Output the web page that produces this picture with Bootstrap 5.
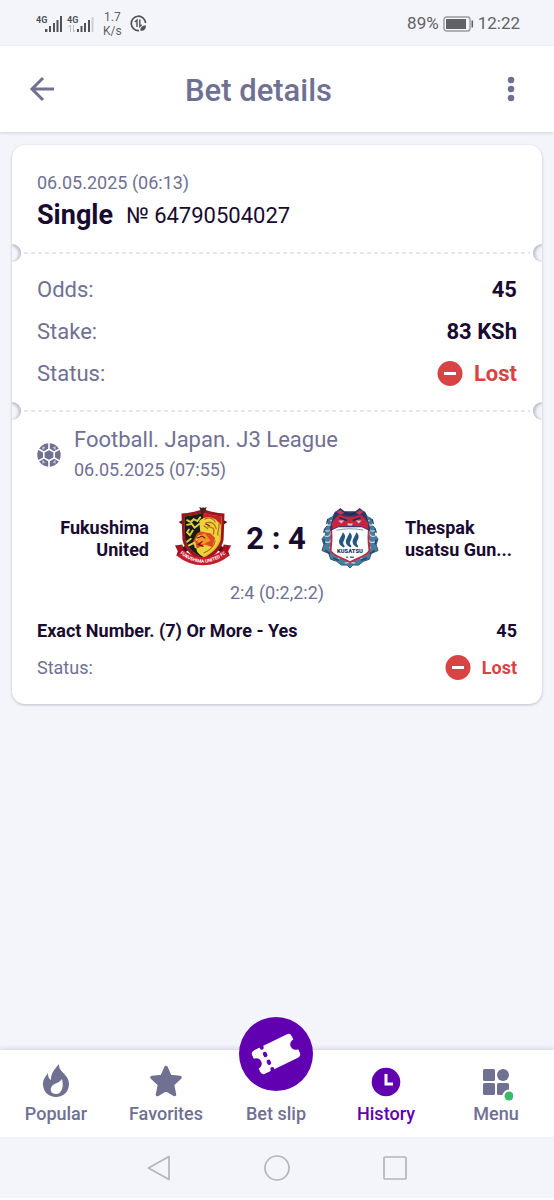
<!DOCTYPE html>
<html lang="en">
<head>
<meta charset="utf-8">
<meta name="viewport" content="width=device-width, initial-scale=1">
<title>Bet details</title>
<link href="https://cdn.jsdelivr.net/npm/bootstrap@5.3.0/dist/css/bootstrap.min.css" rel="stylesheet">
<style>
:root{--page:#f4f5fa;--muted-ink:#707093;--ink:#190a30;--brand:#6100b0;--lost:#d84444}
body{font-family:Roboto,"Liberation Sans",sans-serif;background:var(--page);color:var(--ink)}
svg{display:block;flex-shrink:0}
a{text-decoration:none;color:inherit}
.ink-muted{color:var(--muted-ink)}
.ink-lost{color:var(--lost)}
.status-bar{height:46px;padding:1px 34px 0 36px;color:#606266;font-size:17px}
.net-speed{font-size:12px;line-height:14px;margin-left:9px;margin-right:8px}
.app-bar{height:86px;padding:0 25px 0 24px;background:#fff;box-shadow:0 1px 3px rgba(60,60,110,.2)}
.app-bar h1{font-size:31px;line-height:40px;font-weight:500;padding:4px 36px 0 0}
.icon-btn{width:36px;height:36px;padding:0;border:0;background:none;display:flex;align-items:center;justify-content:center}
.ticket{margin:13px 12px;background:#fff;border-radius:13px;box-shadow:0 1px 3px rgba(50,50,80,.28)}
.part{position:relative;padding:0 25px}
.part-head{padding-top:24px;padding-bottom:19px}
.part-sums{padding-top:16px;padding-bottom:16px}
.part-event{padding-top:14px;padding-bottom:15px}
.tear{position:absolute;left:0;right:0;bottom:-9px;height:18px;overflow:hidden;z-index:1}
.tear::before,.tear::after{content:"";position:absolute;top:0;width:18px;height:18px;border-radius:50%;background:var(--page)}
.tear::before{left:-9px;box-shadow:inset -2px 1px 3px rgba(50,50,80,.3)}
.tear::after{right:-9px;box-shadow:inset 2px 1px 3px rgba(50,50,80,.3)}
.tear i{position:absolute;left:12px;right:12px;top:8px;height:2px;background:repeating-linear-gradient(90deg,#e6e6ec 0 4px,transparent 4px 7px)}
.fs-date{font-size:18px;line-height:28px}
.kind{font-size:27px;line-height:36px;font-weight:700;margin-right:13px}
.number{font-size:22px;line-height:36px;padding-top:1px}
.sum-row{font-size:22px;line-height:42px}
.sum-row dt{font-weight:400}
.league{font-size:22px;line-height:30px}
.kickoff{font-size:18px;line-height:30px}
.match{height:68px;margin-top:18px;gap:25px}
.team{font-size:18px;line-height:22px;font-weight:700;flex:1 1 0;min-width:0;padding-top:3px}
.versus{width:206px}
.score{font-size:31px;line-height:40px;font-weight:700;padding-top:3px}
.halves{font-size:18px;line-height:44px}
.pick{font-size:18px;line-height:32px;font-weight:700}
.result{font-size:18px;line-height:42px}
.tabs{height:87px;padding:0 3px 0 1px;background:#fff;box-shadow:0 -2px 4px rgba(60,60,110,.15)}
.tab-link{height:87px;font-size:18px;line-height:24px;font-weight:500;color:var(--muted-ink);position:relative;padding-bottom:11px}
.tab-link.active{color:var(--brand)}
.tab-icon{height:38px}
.slip-btn{position:absolute;left:50%;top:-33px;width:74px;height:74px;margin-left:-37px;border-radius:50%;background:var(--brand)}
.sys-bar{height:61px;gap:92px}
.page-end{height:2px;background:#fff}
</style>
</head>
<body>
<div class="d-flex flex-column min-vh-100">
<div class="status-bar d-flex align-items-center justify-content-between">
  <div class="d-flex align-items-center">
    <svg width="58" height="22" viewBox="0 0 58 22" fill="#505258">
      <g font-family="Roboto" font-size="9" font-weight="700"><text x="0" y="10">4G</text><text x="31" y="10">4G</text></g>
      <path d="M9 16h2.400v3H9zM13 13h2v6h-2zM17 10h2v9h-2zM20.500 7h2v12h-2zM24 3h2v16h-2zM41 16h2v3h-2zM44.500 13h2v6h-2zM48 10h2v9h-2zM52 7h2v12h-2z"/>
      <path d="M55.500 4h2v15h-2z" fill="#cfd1d6"/><path d="M34.500 19v-7l-2 2m5-2v7l2-2" fill="none" stroke="#bcbec4"/>
    </svg>
    <div class="net-speed text-center">1.7<br>K/s</div>
    <svg width="17" height="17" viewBox="0 0 17 17" fill="none" stroke="#505258" stroke-width="1.700"><path d="M15.600 8A7.200 7.200 0 1 0 9 15.600"/><path d="M7 12v-7L4.800 7M9.800 4.500v7l2-1.800" stroke-width="1.400"/><path d="M10.500 15.800c-.6-4 2-5.300 5.500-5.400 0 3-1.500 5.700-5.500 5.400z" fill="#505258" stroke="none"/></svg>
  </div>
  <div class="d-flex align-items-center gap-1">
    <span>89%</span>
    <svg width="31" height="16" viewBox="0 0 31 16"><rect x="1" y="1" width="26" height="14" rx="2.500" fill="none" stroke="#9a9ca0" stroke-width="1.400"/><path d="M3 3h20v10H3z" fill="#606266"/><path d="M28.500 4.500h1.600v7h-1.600z" fill="#606266"/></svg>
    <span>12:22</span>
  </div>
</div>
<header class="app-bar d-flex align-items-center ink-muted">
  <button class="icon-btn ink-muted" type="button" aria-label="Back"><svg width="26" height="26" viewBox="0 0 26 26" fill="none" stroke="currentColor" stroke-width="3"><path d="M14 2 3 13l11 11M3 13h22"/></svg></button>
  <h1 class="m-0 flex-grow-1 text-center">Bet details</h1>
  <button class="icon-btn ink-muted" type="button" aria-label="More"><svg width="8" height="26" viewBox="0 0 8 26" fill="currentColor"><circle cx="4" cy="4" r="3.300"/><circle cx="4" cy="13" r="3.300"/><circle cx="4" cy="22" r="3.300"/></svg></button>
</header>
<main class="flex-grow-1">
<article class="ticket">
  <section class="part part-head">
    <div class="fs-date ink-muted">06.05.2025 (06:13)</div>
    <div class="d-flex"><span class="kind">Single</span><span class="number">№ 64790504027</span></div>
    <div class="tear"><i></i></div>
  </section>
  <section class="part part-sums">
    <dl class="m-0">
      <div class="sum-row d-flex justify-content-between"><dt class="ink-muted">Odds:</dt><dd class="m-0 fw-bold">45</dd></div>
      <div class="sum-row d-flex justify-content-between"><dt class="ink-muted">Stake:</dt><dd class="m-0 fw-bold">83 KSh</dd></div>
      <div class="sum-row d-flex justify-content-between"><dt class="ink-muted">Status:</dt><dd class="m-0 fw-bold ink-lost d-flex align-items-center"><svg class="me-2" width="29" height="26" viewBox="0 0 29 26"><circle cx="13" cy="12.500" r="12.500" fill="currentColor"/><path d="M7 11h12v3H7z" fill="#fff"/></svg>Lost</dd></div>
    </dl>
    <div class="tear"><i></i></div>
  </section>
  <section class="part part-event">
    <div class="d-flex align-items-center ink-muted">
      <svg class="me-2" width="29" height="24" viewBox="0 0 29 24"><circle cx="12" cy="12" r="11.700" fill="currentColor"/><g fill="none" stroke="#fff" stroke-width="1.600"><path d="M12 6.200l5.200 2.900v5.800L12 17.800l-5.200-2.900V9.100z"/><path d="M12 0v6.200M12 17.800V24M6.800 9.100L1 5.800M17.200 9.100L23 5.800M6.800 14.900L1 18.200M17.200 14.900l5.800 3.300"/></g><path d="M5.200 3.500l3.300.7-3 3.300zM18.800 3.500l-3.300.7 3 3.300zM5.200 20.500l3.300-.7-3-3.300zM18.800 20.500l-3.300-.7 3-3.300z" fill="#fff" opacity=".55"/></svg>
      <div><div class="league">Football. Japan. J3 League</div><div class="kickoff">06.05.2025 (07:55)</div></div>
    </div>
    <div class="match d-flex align-items-center">
      <div class="team text-end">Fukushima<br>United</div>
      <div class="versus d-flex align-items-center justify-content-between">
      <svg width="58" height="64" viewBox="0 0 62 64">
        <path d="M5 16l4-2 5 8 41 22-3 6zM57 16l-4-2-5 8L7 44l3 6z" fill="#4a1418"/>
        <path d="M8 7c9-1 15-2 23-5 8 3 14 4 23 5l-1 28c-2 11-12 19-22 25-10-6-20-14-22-25z" fill="#9e1520"/>
        <path d="M11 10c8-1 13-2 20-4 7 2 12 3 20 4l-1 25c-2 8-10 15-19 20-9-5-17-12-19-20z" fill="#e3b92d"/>
        <path d="M11 10c8-1 13-2 20-4v49c-9-5-17-12-19-20z" fill="#1a1c14"/>
        <path d="M31 6c7 2 12 3 20 4l-1 9-6-6-7-2-6 4z" fill="#c3202a"/>
        <path d="M27 15c5-6 15-5 19 0 5 4 3 8 4 12-3 3 0 8-3 11-3 7-9 12-16 15-6-3-8-7-7-13l5-4z" fill="#ecd23b"/>
        <path d="M24 29c5-5 9-1 15-1l5 5-3 10-8-3-8 4-5-6z" fill="#df4a21"/>
        <path d="M25 31l8-3 6 8-8 4-6-3z" fill="#f2982b"/>
        <g fill="none" stroke-linecap="round"><path d="M14 14l4 2 3-3 4 2 3-4m-14 8 5-1 3 4 5-4m-11 6-2 3 3 3 3-5m-6 12 4-3m-2 7 6-3 1 5m1-8 3-4" stroke="#ddcf48" stroke-width="2"/><path d="M33 13c5-3 9-1 11 3m-10 1c6-2 10 1 11 6m-9-2c6 0 8 3 6 8m6-11c1 6-2 7-1 12M32 20l4 3m-4 26c7-3 11-7 12-13" stroke="#b8651c" stroke-width="1.200"/><path d="M25 33l5-2 3 2m-3 4-4 3 5 2M34 18l4 2" stroke="#65150f" stroke-width="1.200"/></g>
        <path d="M28 3l-1-3 3 1 1-1 1 1 3-1-1 3-2 4h-2z" fill="#47211a"/>
        <path d="M5 48c16 13 36 13 52 0" fill="none" stroke="#c51c2c" stroke-width="9"/>
        <path d="M1 41l8-1 2 10-8 1 1-4zM61 41l-8-1-2 10 8 1-1-4z" fill="#a90f20"/>
        <path id="ribbonLine" d="M2 46Q31 73 60 46" fill="none"/>
        <text font-family="Roboto" font-size="5" font-weight="700" fill="#fff" text-anchor="middle"><textPath href="#ribbonLine" startOffset="50%">FUKUSHIMA UNITED FC</textPath></text>
      </svg>
      <div class="score">2 : 4</div>
      <svg width="60" height="64" viewBox="0 0 62 64">
        <path d="M16 6l-3 5-4 2 0 6-4 4 1 6-4 5 2 6-2 6 7 3 2 6 6 2 5 4 6 0 3 3 3-3 6 0 5-4 6-2 2-6 7-3-2-6 2-6-4-5 1-6-4-4 0-6-4-2-3-5z" fill="#4a7d99" stroke="#2d5578" stroke-width="1"/>
        <g fill="none" stroke-linecap="round"><path d="M11 15c4 1 1 5-3 5m3 1c2 4-3 6-6 4m6 1c1 5-4 7-7 4m8 3c0 5-4 5-7 4m9 1c1 5-2 6-4 5m8 1c2 4-2 6-5 5m9-1c2 3 0 5-3 6M51 15c-4 1-1 5 3 5m-3 1c-2 4 3 6 6 4m-6 1c-1 5 4 7 7 4m-8 3c0 5 4 5 7 4m-9 1c-1 5 2 6 4 5m-8 1c-2 4 2 6 5 5m-9-1c-2 3 0 5 3 6M26 59l5-1 5 1" stroke="#b9d8e4" stroke-width="1.200"/><path d="M8 14l-1 4m-2 6-1 3m0 8 1 4m1 7 4 3m4 5 5 2M54 14l1 4m2 6 1 3m0 8-1 4m-1 7-4 3m-4 5-5 2" stroke="#25486f" stroke-width="1.500"/></g>
        <path d="M11 22c10-4 30-4 40 0-2 8-1 16 0 24-3 6-12 7-20 12-8-5-17-6-20-12 1-8 2-16 0-24z" fill="#fff" stroke="#c62645" stroke-width="1.800"/>
        <path d="M11 19l4-12 6-5 5 4h10l5-4 6 5 4 12 1 7-9-4H19l-9 4z" fill="#2a3a64"/>
        <path d="M12 18l4-6 4-3 7 2h8l7-2 4 3 4 6-1 6-7-3H20l-7 3z" fill="#c72444"/>
        <path d="M17 6l4-2 4 3-4 2zM45 6l-4-2-4 3 4 2z" fill="#c93752"/>
        <path d="M19 15h6l-3 3zM43 15h-6l3 3zM28 18h6l-1 2h-4z" fill="#e4c4ce"/>
        <path d="M20 12l8 3m14-3-8 3M25 7l6 2 6-2" fill="none" stroke="#1b2c55" stroke-width="1.500"/>
        <path d="M17 25c8-2 20-2 28 0" fill="none" stroke="#8193aa"/>
        <path d="M24 29c4 4-5 8 1 13-8-4-3-8-1-13zm7 0c4 4-5 8 1 13-8-4-3-8-1-13zm7 0c4 4-5 8 1 13-8-4-3-8-1-13z" fill="#24577f" stroke="#24577f" stroke-width="2"/>
        <text x="31" y="49" font-family="Roboto" font-size="6" font-weight="900" fill="#1d315c" text-anchor="middle">KUSATSU</text><path d="M27 53h2m2 0h4" fill="none" stroke="#53698c" stroke-width="1.500"/>
      </svg>
      </div>
      <div class="team text-nowrap">Thespak<br>usatsu Gun...</div>
    </div>
    <div class="halves text-center ink-muted">2:4 (0:2,2:2)</div>
    <div class="pick d-flex justify-content-between"><span>Exact Number. (7) Or More - Yes</span><span>45</span></div>
    <div class="result d-flex justify-content-between"><span class="ink-muted">Status:</span><span class="fw-bold ink-lost d-flex align-items-center"><svg class="me-2" width="29" height="26" viewBox="0 0 29 26"><circle cx="13" cy="12.500" r="12.500" fill="currentColor"/><path d="M7 11h12v3H7z" fill="#fff"/></svg>Lost</span></div>
  </section>
</article>
</main>
<nav class="tabs row row-cols-5 g-0">
  <a href="#" class="tab-link col d-flex flex-column align-items-center justify-content-end"><span class="tab-icon"><svg width="28" height="34" viewBox="0 0 28 34"><path d="M17 0c-1 8 10 10 10 20 0 8-6 13-13 13S1 28 1 20C1 15 4 12 6 9c0 4 1 6 3 7C9 8 13 5 17 0z" fill="currentColor"/><path d="M20 15c2 7 0 15-6 15-4 0-6-3-5-6 1-5 8-4 11-9z" fill="#fff"/></svg></span>Popular</a>
  <a href="#" class="tab-link col d-flex flex-column align-items-center justify-content-end"><span class="tab-icon"><svg width="34" height="34" viewBox="0 0 34 34"><path d="M17 3.500l4 9 10 1-7.500 7 2 10L17 25.500 8.500 30.500l2-10L3 13.500l10-1z" fill="currentColor" stroke="currentColor" stroke-width="3.500" stroke-linejoin="round"/></svg></span>Favorites</a>
  <a href="#" class="tab-link col d-flex flex-column align-items-center justify-content-end"><span class="slip-btn"><svg width="74" height="74" viewBox="0 0 74 74"><g transform="rotate(-26 37 37)"><path d="M19 24H55Q59 24 59 28V31.500A5.500 5.500 0 0 0 59 42.500V46Q59 50 55 50H19Q15 50 15 46V42.500A5.500 5.500 0 0 0 15 31.500V28Q15 24 19 24Z" fill="#fff"/><path d="M27 23.500v28" stroke="#6100b0" stroke-width="4" stroke-dasharray="1.500 7" stroke-linecap="round"/></g></svg></span>Bet slip</a>
  <a href="#" class="tab-link active col d-flex flex-column align-items-center justify-content-end" aria-current="page"><span class="tab-icon"><svg width="30" height="34" viewBox="0 0 30 34"><circle cx="15" cy="18" r="14.300" fill="currentColor"/><path d="M15 10v10h7" fill="none" stroke="#fff" stroke-width="3"/></svg></span>History</a>
  <a href="#" class="tab-link col d-flex flex-column align-items-center justify-content-end"><span class="tab-icon"><svg width="34" height="38" viewBox="0 0 34 38"><g fill="currentColor"><rect x="4" y="5" width="12" height="12" rx="1.500"/><circle cx="24" cy="11" r="6"/><rect x="4" y="19" width="12" height="12" rx="1.500"/><rect x="18" y="19" width="12" height="12" rx="1.500"/></g><circle cx="30" cy="32" r="6.500" fill="#fff"/><circle cx="30" cy="32" r="4.500" fill="#3dba69"/></svg></span>Menu</a>
</nav>
<div class="sys-bar d-flex align-items-center justify-content-center">
  <svg width="26" height="26" viewBox="0 0 26 26" fill="none" stroke="#b4b5ba" stroke-width="1.700" stroke-linejoin="round"><path d="M23 1.500v23L2.500 13z"/></svg>
  <svg width="26" height="26" viewBox="0 0 26 26" fill="none" stroke="#b4b5ba" stroke-width="1.700"><circle cx="13" cy="13" r="12"/></svg>
  <svg width="26" height="26" viewBox="0 0 26 26" fill="none" stroke="#b4b5ba" stroke-width="1.700"><rect x="2" y="2" width="22" height="22" rx="1"/></svg>
</div>
<div class="page-end"></div>
</div>
<script src="https://cdn.jsdelivr.net/npm/bootstrap@5.3.0/dist/js/bootstrap.bundle.min.js"></script>
</body>
</html>
